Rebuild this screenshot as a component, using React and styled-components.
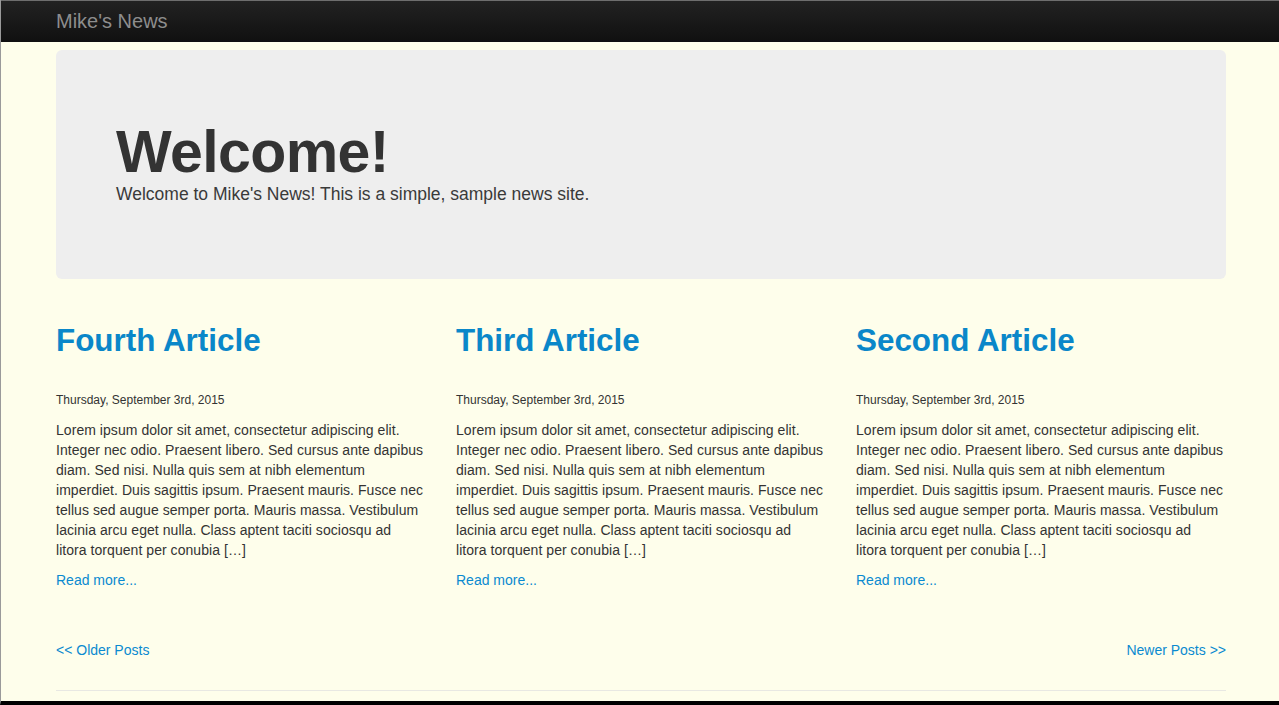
import React from 'react';
import styled, { createGlobalStyle } from 'styled-components';

const GlobalStyle = createGlobalStyle`
  html, body {
    margin: 0;
    padding: 0;
  }

  body {
    background: #fefeeb;
    font-family: 'Liberation Sans', Helvetica, Arial, sans-serif;
    color: #333;
  }
`;

const Page = styled.div`
  box-sizing: border-box;
  min-height: 100vh;
  border-left: 1px solid #9a9a9a;
  border-bottom: 4px solid #000;
  padding-left: 2px;
  display: flex;
  flex-direction: column;
`;

const Navbar = styled.header`
  height: 41px;
  margin-left: -2px;
  border-top: 1px solid #6e6e6e;
  background: linear-gradient(to bottom, #222 0%, #101010 100%);
  display: flex;
  align-items: center;
`;

const Container = styled.div`
  width: 1170px;
  margin: 0 auto;
`;

const NavInner = styled(Container)`
  padding-left: 2px;
`;

const Brand = styled.a`
  font-size: 20px;
  color: #8d8d8d;
  text-decoration: none;
  line-height: 20px;
`;

const Jumbotron = styled.section`
  box-sizing: border-box;
  height: 229px;
  margin-top: 8px;
  padding: 73px 60px 0;
  background: #eee;
  border-radius: 6px;
`;

const Heading = styled.h1`
  margin: 0;
  font-size: 59px;
  line-height: 1;
  font-weight: bold;
  letter-spacing: -0.6px;
  color: #333;
`;

const Lead = styled.p`
  margin: 2px 0 0;
  font-size: 17.5px;
  line-height: 1.2;
  font-weight: 300;
  color: #3a3a3a;
`;

const Articles = styled.div`
  display: grid;
  grid-template-columns: repeat(3, 370px);
  column-gap: 30px;
  margin-top: 45px;
`;

const Article = styled.article`
  display: flex;
  flex-direction: column;
  align-items: flex-start;
`;

const Title = styled.a`
  font-size: 31.4px;
  line-height: 1.1;
  font-weight: bold;
  color: #0a87c9;
  text-decoration: none;
`;

const PostDate = styled.p`
  margin: 31px 0 0;
  font-size: 12px;
  line-height: 20px;
  color: #333;
`;

const Excerpt = styled.p`
  max-width: 368px;
  margin: 10px 0 0;
  font-size: 14px;
  line-height: 20px;
  letter-spacing: 0.05px;
  color: #333;
`;

const Link = styled.a`
  font-size: 14px;
  line-height: 20px;
  color: #0a8ad0;
  text-decoration: none;
`;

const ReadMore = styled(Link)`
  margin-top: 10px;
`;

const Pager = styled.nav`
  display: flex;
  justify-content: space-between;
  margin-top: 50px;
`;

const Rule = styled.hr`
  margin: 30px 0 0;
  border: 0;
  border-top: 1px solid #e8e8e3;
`;

const lorem =
  'Lorem ipsum dolor sit amet, consectetur adipiscing elit. Integer nec odio. Praesent libero. Sed cursus ante dapibus diam. Sed nisi. Nulla quis sem at nibh elementum imperdiet. Duis sagittis ipsum. Praesent mauris. Fusce nec tellus sed augue semper porta. Mauris massa. Vestibulum lacinia arcu eget nulla. Class aptent taciti sociosqu ad litora torquent per conubia […]';

const posts = [
  { title: 'Fourth Article', date: 'Thursday, September 3rd, 2015' },
  { title: 'Third Article', date: 'Thursday, September 3rd, 2015' },
  { title: 'Second Article', date: 'Thursday, September 3rd, 2015' },
];

export default function App() {
  return (
    <>
      <GlobalStyle />
      <Page>
        <Navbar>
          <NavInner>
            <Brand href="#">Mike's News</Brand>
          </NavInner>
        </Navbar>
        <Container>
          <Jumbotron>
            <Heading>Welcome!</Heading>
            <Lead>Welcome to Mike's News! This is a simple, sample news site.</Lead>
          </Jumbotron>

          <Articles>
            {posts.map((post) => (
              <Article key={post.title}>
                <Title href="#">{post.title}</Title>
                <PostDate>{post.date}</PostDate>
                <Excerpt>{lorem}</Excerpt>
                <ReadMore href="#">Read more...</ReadMore>
              </Article>
            ))}
          </Articles>

          <Pager>
            <Link href="#">&lt;&lt; Older Posts</Link>
            <Link href="#">Newer Posts &gt;&gt;</Link>
          </Pager>
          <Rule />
        </Container>
      </Page>
    </>
  );
}
